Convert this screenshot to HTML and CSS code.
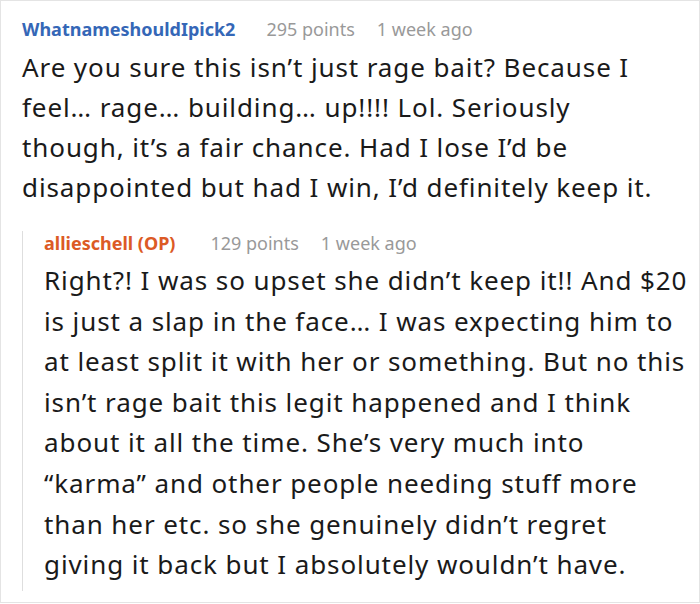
FILE: index.html
```html
<!DOCTYPE html>
<html lang="en">
<head>
<meta charset="utf-8">
<title>Comments</title>
<link rel="stylesheet" href="styles.css">
</head>
<body>
<div class="thread">
  <div class="comment">
    <div class="meta">
      <span class="author">WhatnameshouldIpick2</span>
      <span class="points">295 points</span>
      <span class="time">1 week ago</span>
    </div>
    <p class="body">Are you sure this isn’t just rage bait? Because I feel… rage… building… up!!!! Lol. Seriously though, it’s a fair chance. Had I lose I’d be disappointed but had I win, I’d definitely keep it.</p>
    <div class="reply">
      <div class="meta">
        <span class="author op">allieschell (OP)</span>
        <span class="points">129 points</span>
        <span class="time">1 week ago</span>
      </div>
      <p class="body">Right?! I was so upset she didn’t keep it!! And $20 is just a slap in the face… I was expecting him to at least split it with her or something. But no this isn’t rage bait this legit happened and I think about it all the time. She’s very much into “karma” and other people needing stuff more than her etc. so she genuinely didn’t regret giving it back but I absolutely wouldn’t have.</p>
    </div>
  </div>
</div>
</body>
</html>
```

FILE: styles.css
```css
html, body {
  margin: 0;
  padding: 0;
  background: #ffffff;
}
body {
  font-family: "Noto Sans", "Open Sans", sans-serif;
  color: #1a1a1a;
}
.thread {
  box-sizing: border-box;
  width: 700px;
  height: 603px;
  border: 1px solid #e4e4e4;
  overflow: hidden;
}
.comment {
  padding: 16px 12px 0 21px;
}
.meta {
  display: flex;
  align-items: baseline;
  font-size: 18px;
  line-height: 24px;
  white-space: nowrap;
}
.author {
  font-weight: 700;
  color: #3567b7;
  margin-right: 31px;
}
.author.op {
  color: #dc5a25;
  margin-right: 35px;
}
.points {
  margin-right: 22px;
}
.points, .time {
  color: #999999;
}
.body {
  margin: 6px 17px 0 0;
  font-size: 26px;
  line-height: 40px;
  letter-spacing: 0.9px;
  color: #1a1a1a;
}
.reply {
  margin-top: 24px;
  margin-right: -5px;
  border-left: 1px solid #dedede;
  padding-left: 21px;
  padding-bottom: 6px;
}
.reply .body {
  margin: 5px 0 0 0;
  line-height: 40.6px;
}
```
